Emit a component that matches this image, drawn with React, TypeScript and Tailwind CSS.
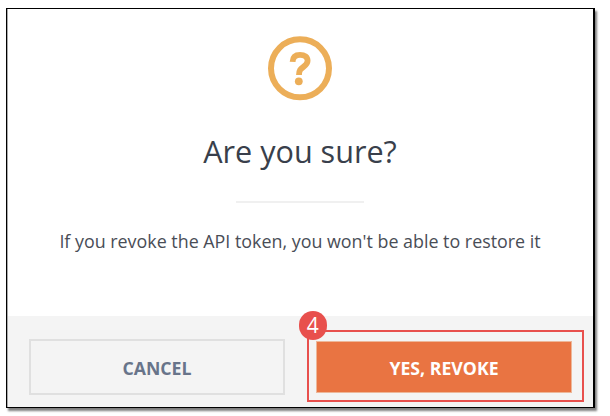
function QuestionIcon() {
  return (
    <svg width="66" height="66" viewBox="0 0 66 66" fill="none" aria-hidden="true">
      <circle cx="33" cy="33.3" r="29" stroke="#ecae58" strokeWidth="6" />
      <path
        d="M25.6 26.8C25.8 22 28.6 19.9 33 19.9C37.6 19.9 40.6 22 40.6 25.8C40.6 28.7 38.6 30.4 36.3 32C33.6 33.9 32 35.2 32 39.9"
        stroke="#ecae58"
        strokeWidth="5.8"
      />
      <circle cx="31.8" cy="46.3" r="3.9" fill="#ecae58" />
    </svg>
  );
}

function StepBadge({ step }: { step: number }) {
  return (
    <span className="absolute -left-[10.5px] -top-[21px] flex size-[28.5px] items-center justify-center rounded-full bg-[#e8504d] text-[21px] font-normal leading-none text-white">
      {step}
    </span>
  );
}

export default function App() {
  return (
    <div className="h-[416px] w-[610px] overflow-hidden bg-white pl-[6px] pt-2 font-['Open_Sans',sans-serif]">
      <div className="flex h-[400px] w-[589px] flex-col border border-r-2 border-black bg-white shadow-[2px_3px_2px_rgba(0,0,0,0.5)]">
        <div className="flex flex-1 flex-col items-center border-l border-[#aaa] pr-px pt-[26px]">
          <QuestionIcon />
          <h1 className="mt-[29px] text-[30.6px] leading-[42px] text-[#393f4b]">Are you sure?</h1>
          <div className="mt-[29px] h-[2px] w-32 bg-[#f0f0f0]" />
          <p className="mt-[26px] whitespace-nowrap text-[17.87px] leading-6 text-[#494d56]">
            If you revoke the API token, you won't be able to restore it
          </p>
        </div>

        <div className="flex h-[91px] items-start border-l border-[#aaa] bg-[#f4f4f4] pl-[21px] pt-[14px] text-[17.7px] font-bold">
          <button className="mt-[9px] h-[56px] w-[256px] border-2 border-[#e0e0e0] pt-[2px] text-[#68748a]">
            CANCEL
          </button>
          <div className="relative ml-[22px] h-[72px] w-[277px] border-2 border-[#e8504d] px-[7px] pt-[9px]">
            <button className="h-[52px] w-[256px] border border-[#edb799] bg-[#e97442] pt-[2px] text-white">
              YES, REVOKE
            </button>
            <StepBadge step={4} />
          </div>
        </div>
      </div>
    </div>
  );
}
